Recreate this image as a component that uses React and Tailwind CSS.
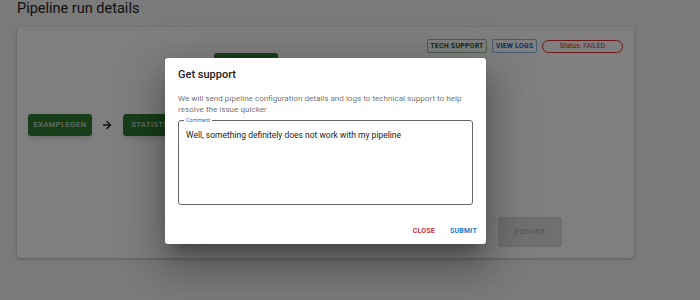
import React from "react";
import { ArrowRight } from "lucide-react";

const FONT = { fontFamily: "Roboto, 'Noto Sans', sans-serif" };

function Node({ label, className = "" }) {
  return (
    <div
      className={`h-[22px] px-[11px] flex items-center justify-center rounded-[3px] bg-[#2f7d33] text-white/90 text-[7.5px] font-normal tracking-[0.5px] shadow-md ${className}`}
    >
      {label}
    </div>
  );
}

export default function App() {
  return (
    <div className="relative w-[700px] h-[300px] overflow-hidden bg-[#f4f4f4]" style={FONT}>
      {/* page */}
      <div className="px-[17px] pt-[1px]">
        <h1 className="text-[14.5px] leading-[16px] text-[#222] font-normal">Pipeline run details</h1>

        <div className="mt-[10px] w-[617px] h-[231px] bg-white rounded-[3px] shadow-[0_1px_3px_rgba(0,0,0,0.25)] relative">
          {/* header actions */}
          <div className="flex justify-end items-center gap-[5px] pt-[12px] pr-[11px]">
            <button className="h-[14px] w-[60px] border border-[#2e7d32]/50 rounded-[2px] text-[#1b5e20] text-[7px] font-bold tracking-[0.2px] flex items-center justify-center">
              TECH SUPPORT
            </button>
            <button className="h-[14px] w-[45px] border border-[#1976d2]/50 rounded-[2px] text-[#1565c0] text-[7px] font-bold tracking-[0.2px] flex items-center justify-center">
              VIEW LOGS
            </button>
            <div className="h-[13px] w-[81px] border border-[#d32f2f] rounded-full text-[#d32f2f] text-[7px] flex items-center justify-center">
              Status: FAILED
            </div>
          </div>

          {/* graph */}
          <div className="absolute left-[11px] top-[87px] flex items-center">
            <Node label="EXAMPLEGEN" className="w-[64px]" />
            <ArrowRight size={12} strokeWidth={2.6} className="ml-[9px] text-[#222]" />
            <Node label="STATISTICSGEN" className="ml-[10px] w-[78px]" />
          </div>
          <Node label="SCHEMAGEN" className="absolute left-[197px] top-[26px] w-[64px]" />
          <div className="absolute left-[481px] top-[190px] w-[64px] h-[30px] rounded-[3px] bg-black/[0.12] text-black/[0.26] text-[7.5px] font-medium tracking-[0.4px] flex items-center justify-center">
            PUSHER
          </div>
        </div>
      </div>

      {/* backdrop */}
      <div className="absolute inset-0 bg-black/50" />

      {/* dialog */}
      <div className="absolute left-[165px] top-[58px] w-[321px] h-[186px] bg-white rounded-[3px] shadow-[0_11px_15px_-7px_rgba(0,0,0,0.3),0_24px_38px_3px_rgba(0,0,0,0.2),0_9px_46px_8px_rgba(0,0,0,0.15)] flex flex-col">
        <div className="px-[13px] pt-[10px]">
          <h2 className="text-[11px] leading-[14px] font-medium text-[#222]">Get support</h2>
          <p className="mt-[11px] text-[8.1px] leading-[11px] text-black/60">
            We will send pipeline configuration details and logs to technical support to help resolve the issue quicker
          </p>
          <div className="relative mt-[5px] h-[85px] w-[295px] border border-[#666] rounded-[3px]">
            <span className="absolute -top-[3px] left-[5px] px-[2px] bg-white text-[5.5px] leading-[5px] text-[#1976d2]">
              Comment
            </span>
            <div className="pl-[7px] pt-[9px] text-[8.5px] leading-[11px] text-[#222]">
              Well, something definitely does not work with my pipeline
            </div>
          </div>
        </div>
        <div className="mt-auto flex justify-end items-center gap-[15px] pr-[9px] pb-[8px]">
          <button className="text-[7px] font-bold tracking-[0.2px] text-[#d32f2f]">CLOSE</button>
          <button className="text-[7px] font-bold tracking-[0.2px] text-[#1976d2]">SUBMIT</button>
        </div>
      </div>
    </div>
  );
}
